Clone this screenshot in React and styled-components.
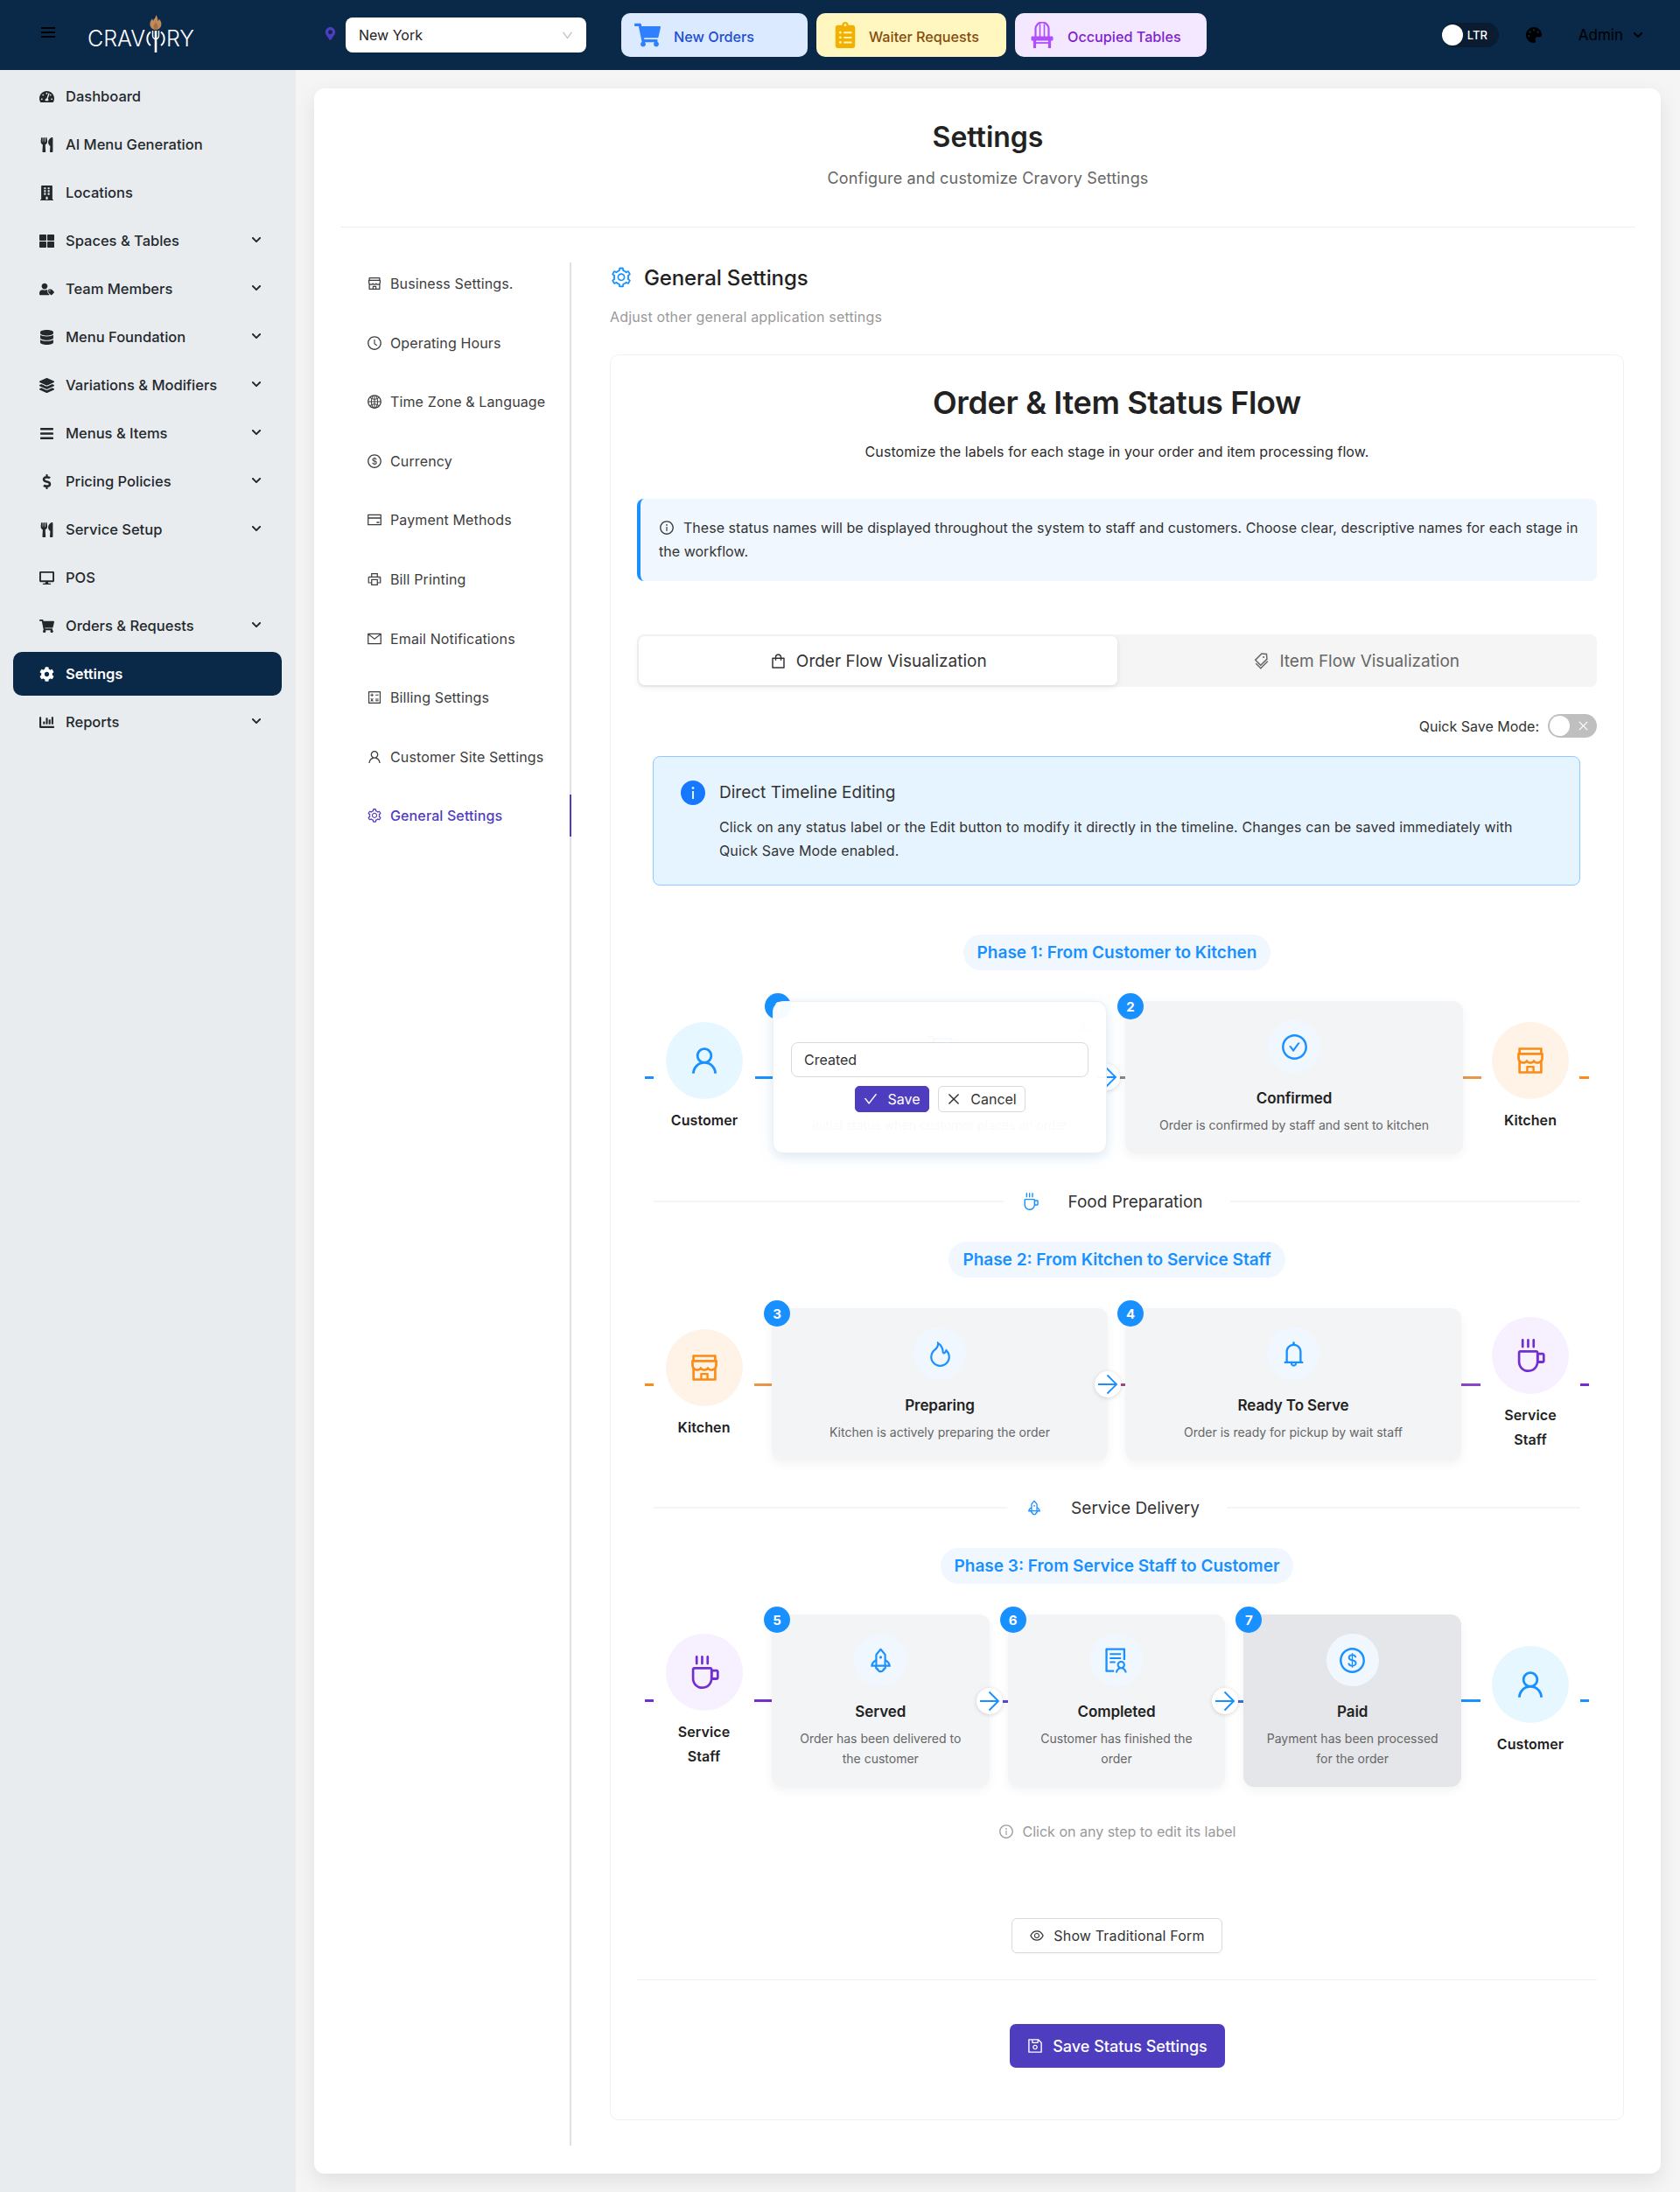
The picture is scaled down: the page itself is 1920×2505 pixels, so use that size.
import React from "react";
import styled, { createGlobalStyle } from "styled-components";
import {
  FaTachometerAlt, FaUtensils, FaBuilding, FaThLarge, FaUserTag, FaDatabase, FaLayerGroup, FaBars,
  FaDollarSign, FaDesktop, FaShoppingCart, FaCog, FaChartBar, FaChevronDown, FaMapMarkerAlt,
  FaClipboardList, FaPalette,
} from "react-icons/fa";
import {
  AiOutlineShop, AiOutlineClockCircle, AiOutlineGlobal, AiOutlineDollar, AiOutlineCreditCard,
  AiOutlinePrinter, AiOutlineMail, AiOutlineCalculator, AiOutlineUser, AiOutlineSetting,
  AiOutlineInfoCircle, AiOutlineShopping, AiOutlineTags, AiOutlineCheckCircle, AiOutlineCoffee,
  AiOutlineFire, AiOutlineBell, AiOutlineRocket, AiOutlineSolution, AiOutlineEye, AiOutlineSave,
  AiOutlineEdit, AiOutlineCheck, AiOutlineClose, AiOutlineShoppingCart,
  AiFillInfoCircle, AiOutlineDown,
} from "react-icons/ai";

const NAVY = "#0a2848";
const INDIGO = "#4f3dc0";
const BLUE = "#1890ff";
const ORANGE = "#fa8c16";
const PURPLE = "#722ed1";

const Global = createGlobalStyle`
  * { box-sizing: border-box; }
  html, body { margin: 0; padding: 0; }
  body {
    font-family: Inter, "Noto Sans", "Liberation Sans", sans-serif;
    background: #f5f5f5;
    color: #212529;
  }
`;

const Header = styled.header`
  height: 80px;
  background: ${NAVY};
  display: flex;
  align-items: center;
  padding: 0 42px 0 47px;
`;
const Burger = styled.div`
  width: 16px;
  margin-top: -6px;
  display: grid;
  gap: 3px;
  & > i { display: block; height: 2px; background: #000; }
`;
const Logo = styled.div`
  margin-left: 37px;
  width: 122px;
  height: 43px;
  margin-top: 17px;
  align-self: flex-start;
  display: flex;
  align-items: flex-start;
  color: #fff;
  font-size: 25px;
  font-weight: 300;
  line-height: 18px;
  & > span { margin-top: 18px; }
  & > svg { flex: none; margin: 0 -3px; }
`;
const Pin = styled.div`
  margin-left: 148px;
  width: 25px;
  display: flex;
  color: ${INDIGO};
  font-size: 15px;
  margin-top: -3px;
`;
const Select = styled.div`
  width: 275px;
  height: 40px;
  background: #fff;
  border-radius: 8px;
  display: flex;
  align-items: center;
  justify-content: space-between;
  padding: 0 14px 0 15px;
  font-size: 16px;
  color: #222;
  & > svg { color: #bfbfbf; font-size: 15px; }
`;
const NotifyRow = styled.div`
  margin-left: 40px;
  display: flex;
  gap: 10px;
`;
const NotifyBtn = styled.div`
  width: ${(p) => p.$w}px;
  height: 50px;
  border-radius: 10px;
  background: ${(p) => p.$bg};
  color: ${(p) => p.$fg};
  display: flex;
  align-items: center;
  padding-left: 15px;
  font-size: 16.2px;
  font-weight: 500;
`;
const NotifyLabel = styled.span`
  margin-top: 3px;
`;
const NotifyIcon = styled.span`
  width: 45px;
  flex: none;
  display: flex;
  padding-left: ${(p) => p.$pad || 0}px;
  color: ${(p) => p.$c};
  font-size: 30px;
`;
const HeaderEnd = styled.div`
  margin-left: auto;
  display: flex;
  align-items: center;
  color: #000;
`;
const DirToggle = styled.div`
  width: 65px;
  height: 28px;
  border-radius: 14px;
  background: #0b1b30;
  display: flex;
  align-items: center;
  gap: 5px;
  color: #fff;
  font-size: 13px;
  font-weight: 500;
  & > i { width: 24px; height: 24px; background: #fff; border-radius: 50%; display: block; }
`;
const Palette = styled.span`
  display: flex;
  margin-left: 31px;
  font-size: 18px;
`;
const Admin = styled.span`
  margin-left: 42px;
  display: flex;
  align-items: center;
  gap: 11px;
  font-size: 17px;
  & > svg { font-size: 12px; }
`;

const Shell = styled.div`
  display: flex;
  align-items: stretch;
`;
const Sidebar = styled.aside`
  width: 338px;
  flex: none;
  background: #e9ecef;
  padding: 5px 16px 0 15px;
  display: grid;
  align-content: start;
  gap: 5px;
`;
const SideItem = styled.div`
  height: 50px;
  display: flex;
  align-items: center;
  padding: 0 23px 0 30px;
  border-radius: 10px;
  font-size: 16.5px;
  font-weight: ${(p) => (p.$active ? 600 : 500)};
  background: ${(p) => (p.$active ? NAVY : "transparent")};
  color: ${(p) => (p.$active ? "#fff" : "#23282d")};
`;
const SideIcon = styled.span`
  width: 30px;
  flex: none;
  display: flex;
  font-size: 17px;
`;
const SideChevron = styled.span`
  margin-left: auto;
  margin-top: -3px;
  display: flex;
  font-size: 12px;
`;

const Main = styled.main`
  flex: 1;
  min-width: 0;
  padding: 21px 22px 21px 21px;
`;
const Card = styled.div`
  background: #fff;
  border-radius: 12px;
  box-shadow: 0 8px 24px rgba(0, 0, 0, 0.09);
  padding: 36px 29px 32px 30px;
`;
const PageHead = styled.div`
  text-align: center;
  padding-bottom: 41px;
  border-bottom: 1px solid #eeeeee;
`;
const PageTitle = styled.h1`
  margin: 0;
  font-size: 32px;
  line-height: 40px;
  font-weight: 600;
  color: #222;
`;
const PageSub = styled.p`
  margin: 13px 0 0;
  font-size: 18px;
  line-height: 28px;
  letter-spacing: 0.01em;
  color: #666;
`;
const Columns = styled.div`
  margin-top: 40px;
  display: flex;
  align-items: stretch;
`;
const SettingsNav = styled.nav`
  width: 264px;
  flex: none;
  border-right: 2px solid #dfe1e5;
`;
const NavItem = styled.div`
  height: 48px;
  margin-bottom: 19.6px;
  margin-right: -2px;
  padding-left: 30px;
  display: flex;
  align-items: center;
  gap: 9px;
  font-size: 16px;
  letter-spacing: 0.008em;
  color: ${(p) => (p.$active ? INDIGO : "#3d3d3d")};
  font-weight: ${(p) => (p.$active ? 500 : 400)};
  border-right: 2px solid ${(p) => (p.$active ? INDIGO : "transparent")};
  & > svg { font-size: 18px; flex: none; }
`;
const Pane = styled.section`
  flex: 1;
  min-width: 0;
  padding: 0 13px 29px 44px;
`;
const PaneHead = styled.div`
  height: 34px;
  display: flex;
  align-items: center;
  gap: 13px;
  font-size: 24px;
  font-weight: 500;
  letter-spacing: -0.005em;
  color: #222;
  & > svg { color: ${BLUE}; font-size: 26px; flex: none; }
`;
const PaneSub = styled.p`
  margin: 16px 0 0;
  font-size: 16px;
  line-height: 24px;
  letter-spacing: 0.01em;
  color: #999;
`;
const Inner = styled.div`
  margin-top: 31px;
  border: 1px solid #f0f0f0;
  border-radius: 10px;
  padding: 29px 30px 59px;
`;
const FlowTitle = styled.h2`
  margin: 0;
  text-align: center;
  font-size: 36px;
  line-height: 50px;
  font-weight: 600;
  letter-spacing: -0.01em;
  color: #222;
`;
const FlowSub = styled.p`
  margin: 19px 0 0;
  text-align: center;
  font-size: 16px;
  line-height: 24px;
  letter-spacing: 0.005em;
  color: #2b2b2b;
`;
const Alert = styled.div`
  margin-top: 42px;
  background: #f0f7ff;
  border-left: 4px solid ${BLUE};
  border-radius: 8px;
  padding: 20px 20px 20px 21px;
  font-size: 16px;
  line-height: 27px;
  letter-spacing: 0.002em;
  color: #333;
  white-space: nowrap;
  & > svg { vertical-align: -3px; margin-right: 10px; font-size: 18px; }
`;
const Tabs = styled.div`
  margin-top: 61px;
  height: 60px;
  background: #f5f5f5;
  border-radius: 8px;
  padding: 2px;
  display: grid;
  grid-template-columns: 1fr 1fr;
`;
const Tab = styled.div`
  display: flex;
  align-items: center;
  justify-content: center;
  gap: 10px;
  border-radius: 7px;
  font-size: 19px;
  background: ${(p) => (p.$active ? "#fff" : "transparent")};
  color: ${(p) => (p.$active ? "#333" : "#666")};
  box-shadow: ${(p) => (p.$active ? "0 2px 6px rgba(0,0,0,.1)" : "none")};
  & > svg { font-size: 21px; }
`;
const QuickRow = styled.div`
  margin-top: 31px;
  height: 27px;
  display: flex;
  align-items: center;
  justify-content: flex-end;
  gap: 10px;
  font-size: 16px;
  color: #333;
`;
const Switch = styled.div`
  width: 56px;
  height: 27px;
  border-radius: 14px;
  background: #bfbfbf;
  padding: 2px 8px 2px 2px;
  display: flex;
  align-items: center;
  justify-content: space-between;
  color: #fff;
  font-size: 15px;
  & > i { width: 23px; height: 23px; background: #fff; border-radius: 50%; display: block; }
`;
const TipBox = styled.div`
  margin: 21px 19px 0 18px;
  height: 148px;
  background: #e6f4ff;
  border: 1px solid #91caff;
  border-radius: 8px;
  padding: 27px 20px 0 31px;
  display: grid;
  grid-template-columns: 30px 1fr;
  column-gap: 14px;
`;
const TipIcon = styled.span`
  display: flex;
  color: #1677ff;
  font-size: 34px;
  margin: -3px 0 0 -2px;
`;
const TipTitle = styled.div`
  font-size: 19px;
  line-height: 27px;
  color: #333;
`;
const TipBody = styled.div`
  margin-top: 13px;
  font-size: 16px;
  line-height: 27px;
  letter-spacing: 0.008em;
  color: #333;
  white-space: nowrap;
`;
const PhaseWrap = styled.div`
  margin-top: ${(p) => p.$mt}px;
  display: flex;
  justify-content: center;
`;
const PhasePill = styled.div`
  height: 41px;
  padding: 0 16px;
  border-radius: 21px;
  background: #f0f7ff;
  color: ${BLUE};
  font-size: 19px;
  font-weight: 600;
  display: flex;
  align-items: center;
`;
const FlowRow = styled.div`
  margin: 35px 9px 0 9px;
  display: flex;
  align-items: center;
`;
const Slot = styled.div`
  flex: none;
  display: flex;
  align-items: center;
  justify-content: space-between;
  width: ${(p) => p.$w}px;
`;
const Dash = styled.i`
  display: block;
  height: 3px;
  flex: none;
  width: ${(p) => p.$w}px;
  background: ${(p) => p.$c};
`;
const Entity = styled.div`
  width: 88px;
  flex: none;
  display: flex;
  flex-direction: column;
  align-items: center;
  gap: 10px;
`;
const EntityCircle = styled.div`
  width: 88px;
  height: 88px;
  border-radius: 50%;
  background: ${(p) => p.$bg};
  color: ${(p) => p.$c};
  display: flex;
  align-items: center;
  justify-content: center;
  font-size: 38px;
`;
const EntityLabel = styled.div`
  font-size: 16px;
  font-weight: 600;
  line-height: 28px;
  letter-spacing: 0.005em;
  color: #222;
  text-align: center;
`;
const Steps = styled.div`
  flex: 1;
  min-width: 0;
  display: grid;
  grid-template-columns: ${(p) => p.$cols};
  column-gap: ${(p) => p.$gap}px;
`;
const StepCard = styled.div`
  position: relative;
  background: ${(p) => (p.$dark ? "#e5e6ea" : "#f3f4f6")};
  border-radius: 12px;
  box-shadow: 0 4px 12px rgba(0, 0, 0, 0.05);
  padding: 22px 14px 21px;
  display: flex;
  flex-direction: column;
  align-items: center;
  text-align: center;
`;
const Badge = styled.span`
  position: absolute;
  left: -9px;
  top: -9px;
  width: 30px;
  height: 30px;
  border-radius: 50%;
  background: ${BLUE};
  color: #fff;
  font-size: 15px;
  font-weight: 700;
  display: flex;
  align-items: center;
  justify-content: center;
  z-index: 1;
`;
const StepIcon = styled.div`
  width: 60px;
  height: 60px;
  border-radius: 50%;
  background: #f0f7ff;
  color: ${BLUE};
  display: flex;
  align-items: center;
  justify-content: center;
  font-size: 33px;
`;
const StepTitle = styled.div`
  margin-top: 15px;
  min-height: 28px;
  font-size: 17px;
  line-height: 28px;
  font-weight: 600;
  letter-spacing: -0.005em;
  color: #222;
`;
const StepDesc = styled.div`
  margin-top: 5px;
  font-size: 14px;
  line-height: 23px;
  color: #666;
`;
const Connector = styled.i`
  position: absolute;
  left: 100%;
  top: calc(50% - 1px);
  width: 22px;
  height: 3px;
  background: ${(p) => p.$c};
`;
const ArrowDot = styled.span`
  position: absolute;
  left: calc(100% - 15px);
  top: calc(50% - 15px);
  width: 30px;
  height: 30px;
  border-radius: 50%;
  background: #fff;
  box-shadow: 0 1px 5px rgba(0, 0, 0, 0.15);
  color: ${BLUE};
  display: flex;
  align-items: center;
  justify-content: center;
  z-index: 2;
`;
const GhostPen = styled.span`
  position: absolute;
  top: 18px;
  right: 16px;
  color: #bbb;
  font-size: 18px;
  display: flex;
`;
const EditPanel = styled.div`
  position: absolute;
  inset: 0;
  z-index: 3;
  background: rgba(255, 255, 255, 0.965);
  border: 1px solid #f0f0f0;
  border-radius: 12px;
  box-shadow: 0 4px 18px rgba(24, 144, 255, 0.1);
  padding: 0 20px;
  display: flex;
  flex-direction: column;
  justify-content: center;
  gap: 10px;
`;
const EditInput = styled.div`
  height: 40px;
  background: #fff;
  border: 1px solid #d9d9d9;
  border-radius: 8px;
  padding: 0 14px;
  display: flex;
  align-items: center;
  font-size: 16px;
  color: #333;
`;
const EditBtns = styled.div`
  display: flex;
  justify-content: center;
  gap: 10px;
`;
const SmallBtn = styled.div`
  height: 30px;
  width: ${(p) => p.$w}px;
  border-radius: 5px;
  display: flex;
  align-items: center;
  justify-content: center;
  gap: 10px;
  font-size: 16px;
  background: ${(p) => (p.$primary ? INDIGO : "#fff")};
  color: ${(p) => (p.$primary ? "#fff" : "#333")};
  border: 1px solid ${(p) => (p.$primary ? INDIGO : "#d9d9d9")};
  & > svg { font-size: 18px; }
`;
const SectionDivider = styled.div`
  margin: ${(p) => p.$mt}px 19px 0;
  height: 24px;
  display: flex;
  align-items: center;
  font-size: 19px;
  color: #333;
  & > i { flex: 1; height: 2px; background: #f5f5f5; display: block; }
  & > svg { color: ${BLUE}; font-size: 20px; margin: 0 32px 0 21px; flex: none; }
  & > span { margin-right: 31px; }
`;
const Hint = styled.div`
  margin-top: 39px;
  display: flex;
  align-items: center;
  justify-content: center;
  gap: 10px;
  font-size: 16px;
  line-height: 24px;
  color: #999;
  & > svg { font-size: 18px; }
`;
const CenterRow = styled.div`
  margin-top: ${(p) => p.$mt}px;
  display: flex;
  justify-content: center;
`;
const GhostBtn = styled.div`
  width: 241px;
  height: 40px;
  border: 1px solid #d9d9d9;
  border-radius: 6px;
  box-shadow: 0 2px 0 rgba(0, 0, 0, 0.02);
  display: flex;
  align-items: center;
  justify-content: center;
  gap: 10px;
  font-size: 16px;
  letter-spacing: 0.01em;
  color: #333;
  & > svg { font-size: 18px; }
`;
const Rule = styled.hr`
  margin: 30px 0 0;
  border: 0;
  border-top: 1px solid #f0f0f0;
`;
const SaveBtn = styled.div`
  width: 246px;
  height: 50px;
  border-radius: 7px;
  background: ${INDIGO};
  color: #fff;
  font-size: 18px;
  font-weight: 500;
  display: flex;
  align-items: center;
  justify-content: center;
  gap: 10px;
  & > svg { font-size: 20px; }
`;

const ChairIcon = () => (
  <svg width="26" height="30" viewBox="0 0 26 30" fill="none" stroke="currentColor">
    <path d="M5.5 17V8a7.5 7.5 0 0 1 15 0v9" strokeWidth="2.2" />
    <path d="M10.5 17V2.5M15.5 17V2.5" strokeWidth="1.6" />
    <rect x="0.5" y="16.5" width="25" height="5" rx="1.2" fill="currentColor" stroke="none" />
    <path d="M4.5 21v9M21.5 21v9" strokeWidth="3.2" />
    <path d="M4.5 24h17" strokeWidth="1.8" />
  </svg>
);

const LogoMark = () => (
  <svg width="30" height="43" viewBox="0 0 30 43" fill="none">
    <path d="M15 0c.5 3-2 4.5-3 7-.6-1-.8-2-.6-3-2 2-3 4-3 6.5 0 4 3 6.5 6.5 6.5s6.5-2.5 6.5-6.5c0-3-1.5-4.5-2.5-6-.2 1-.6 2-1.5 2.5.2-3-.9-5.5-2.4-7z" fill="#c08a5a" />
    <path d="M15 8c1 2 2.5 3.5 2.5 5.5 0 2-1 3.5-2.5 3.5s-2.5-1.5-2.5-3.5c0-2 1.5-3 2.5-5.5z" fill="#a5703f" />
    <path d="M9 19.5a10 10 0 0 0 0 15.5M21 19.5a10 10 0 0 1 0 15.5" stroke="#fff" strokeWidth="2" />
    <path d="M15 18v25" stroke="#fff" strokeWidth="2.6" />
    <path d="M11.5 18v6a3.5 3.5 0 0 0 7 0v-6" stroke="#fff" strokeWidth="1.4" />
  </svg>
);

const ArrowGlyph = () => (
  <svg width="24" height="24" viewBox="0 0 24 24" fill="none" stroke="currentColor" strokeWidth="1.9">
    <path d="M1 12h21M11.5 1.5 22 12 11.5 22.5" />
  </svg>
);

const sideItems = [
  [FaTachometerAlt, "Dashboard"],
  [FaUtensils, "AI Menu Generation"],
  [FaBuilding, "Locations"],
  [FaThLarge, "Spaces & Tables", true],
  [FaUserTag, "Team Members", true],
  [FaDatabase, "Menu Foundation", true],
  [FaLayerGroup, "Variations & Modifiers", true],
  [FaBars, "Menus & Items", true],
  [FaDollarSign, "Pricing Policies", true],
  [FaUtensils, "Service Setup", true],
  [FaDesktop, "POS"],
  [FaShoppingCart, "Orders & Requests", true],
  [FaCog, "Settings", false, true],
  [FaChartBar, "Reports", true],
];

const navItems = [
  [AiOutlineShop, "Business Settings."],
  [AiOutlineClockCircle, "Operating Hours"],
  [AiOutlineGlobal, "Time Zone & Language"],
  [AiOutlineDollar, "Currency"],
  [AiOutlineCreditCard, "Payment Methods"],
  [AiOutlinePrinter, "Bill Printing"],
  [AiOutlineMail, "Email Notifications"],
  [AiOutlineCalculator, "Billing Settings"],
  [AiOutlineUser, "Customer Site Settings"],
  [AiOutlineSetting, "General Settings", true],
];

const ENT = {
  customer: { Icon: AiOutlineUser, bg: "#e6f7ff", c: BLUE, label: "Customer" },
  kitchen: { Icon: AiOutlineShop, bg: "#fff3e8", c: ORANGE, label: "Kitchen" },
  staff: { Icon: AiOutlineCoffee, bg: "#f7f0fe", c: PURPLE, label: "Service Staff" },
};

const EntitySlot = ({ kind, side, w, inner = 20, outer = 10, dashIn, dashOut }) => {
  const e = ENT[kind];
  const out = <Dash $w={outer} $c={dashOut || e.c} />;
  const inn = <Dash $w={inner} $c={dashIn || e.c} />;
  return (
    <Slot $w={w}>
      {side === "left" ? out : inn}
      <Entity>
        <EntityCircle $bg={e.bg} $c={e.c}><e.Icon /></EntityCircle>
        <EntityLabel>{e.label}</EntityLabel>
      </Entity>
      {side === "left" ? inn : out}
    </Slot>
  );
};

const Step = ({ n, Icon, title, desc, dark, link, editing }) => (
  <StepCard $dark={dark}>
    <Badge>{n}</Badge>
    {editing && <GhostPen><AiOutlineEdit /></GhostPen>}
    <StepIcon><Icon /></StepIcon>
    <StepTitle>{editing ? "" : title}</StepTitle>
    <StepDesc>{desc}</StepDesc>
    {link && <Connector $c={link} />}
    {link && <ArrowDot><ArrowGlyph /></ArrowDot>}
    {editing && (
      <EditPanel>
        <EditInput>{title}</EditInput>
        <EditBtns>
          <SmallBtn $primary $w={85}><AiOutlineCheck />Save</SmallBtn>
          <SmallBtn $w={100}><AiOutlineClose />Cancel</SmallBtn>
        </EditBtns>
      </EditPanel>
    )}
  </StepCard>
);

export default function App() {
  return (
    <>
      <Global />
      <Header>
        <Burger><i /><i /><i /></Burger>
        <Logo><span>CRAV</span><LogoMark /><span>RY</span></Logo>
        <Pin><FaMapMarkerAlt /></Pin>
        <Select>New York<AiOutlineDown /></Select>
        <NotifyRow>
          <NotifyBtn $w={213} $bg="#dbeafe" $fg="#1d4ed8">
            <NotifyIcon $c="#2f80ff"><FaShoppingCart /></NotifyIcon><NotifyLabel>New Orders</NotifyLabel>
          </NotifyBtn>
          <NotifyBtn $w={217} $bg="#fff7bf" $fg="#854d0e">
            <NotifyIcon $c="#f2b000" $pad={3}><FaClipboardList /></NotifyIcon><NotifyLabel>Waiter Requests</NotifyLabel>
          </NotifyBtn>
          <NotifyBtn $w={219} $bg="#f3e8ff" $fg="#7e22ce">
            <NotifyIcon $c="#b04dff" $pad={3}><ChairIcon /></NotifyIcon><NotifyLabel>Occupied Tables</NotifyLabel>
          </NotifyBtn>
        </NotifyRow>
        <HeaderEnd>
          <DirToggle><i />LTR</DirToggle>
          <Palette><FaPalette /></Palette>
          <Admin>Admin<FaChevronDown /></Admin>
        </HeaderEnd>
      </Header>
      <Shell>
        <Sidebar>
          {sideItems.map(([Icon, label, chev, active]) => (
            <SideItem key={label} $active={active}>
              <SideIcon><Icon /></SideIcon>
              {label}
              {chev && <SideChevron><FaChevronDown /></SideChevron>}
            </SideItem>
          ))}
        </Sidebar>
        <Main>
          <Card>
            <PageHead>
              <PageTitle>Settings</PageTitle>
              <PageSub>Configure and customize Cravory Settings</PageSub>
            </PageHead>
            <Columns>
              <SettingsNav>
                {navItems.map(([Icon, label, active]) => (
                  <NavItem key={label} $active={active}><Icon />{label}</NavItem>
                ))}
              </SettingsNav>
              <Pane>
                <PaneHead><AiOutlineSetting />General Settings</PaneHead>
                <PaneSub>Adjust other general application settings</PaneSub>
                <Inner>
                  <FlowTitle>Order &amp; Item Status Flow</FlowTitle>
                  <FlowSub>Customize the labels for each stage in your order and item processing flow.</FlowSub>
                  <Alert>
                    <AiOutlineInfoCircle />
                    These status names will be displayed throughout the system to staff and customers. Choose clear, descriptive names for each stage in
                    <br />
                    the workflow.
                  </Alert>
                  <Tabs>
                    <Tab $active><AiOutlineShopping />Order Flow Visualization</Tab>
                    <Tab><AiOutlineTags />Item Flow Visualization</Tab>
                  </Tabs>
                  <QuickRow>
                    Quick Save Mode:
                    <Switch><i /><AiOutlineClose /></Switch>
                  </QuickRow>
                  <TipBox>
                    <TipIcon><AiFillInfoCircle /></TipIcon>
                    <div>
                      <TipTitle>Direct Timeline Editing</TipTitle>
                      <TipBody>
                        Click on any status label or the Edit button to modify it directly in the timeline. Changes can be saved immediately with
                        <br />
                        Quick Save Mode enabled.
                      </TipBody>
                    </div>
                  </TipBox>

                  <PhaseWrap $mt={56}><PhasePill>Phase 1: From Customer to Kitchen</PhasePill></PhaseWrap>
                  <FlowRow>
                    <EntitySlot kind="customer" side="left" w={146} />
                    <Steps $cols="382px 386px" $gap={21}>
                      <Step n={1} Icon={AiOutlineShoppingCart} title="Created" desc="Initial status when customer places an order" link="#8a8a8a" editing />
                      <Step n={2} Icon={AiOutlineCheckCircle} title="Confirmed" desc="Order is confirmed by staff and sent to kitchen" />
                    </Steps>
                    <EntitySlot kind="kitchen" side="right" w={144} inner={21} outer={11} dashIn="#e8964a" />
                  </FlowRow>
                  <SectionDivider $mt={43}>
                    <i /><AiOutlineCoffee /><span>Food Preparation</span><i />
                  </SectionDivider>

                  <PhaseWrap $mt={34}><PhasePill>Phase 2: From Kitchen to Service Staff</PhasePill></PhaseWrap>
                  <FlowRow>
                    <EntitySlot kind="kitchen" side="left" w={145} dashIn="#e8964a" />
                    <Steps $cols="1fr 1fr" $gap={20}>
                      <Step n={3} Icon={AiOutlineFire} title="Preparing" desc="Kitchen is actively preparing the order" link="#a04b7e" />
                      <Step n={4} Icon={AiOutlineBell} title="Ready To Serve" desc="Order is ready for pickup by wait staff" />
                    </Steps>
                    <EntitySlot kind="staff" side="right" w={146} inner={22} dashIn="#8a45c8" />
                  </FlowRow>
                  <SectionDivider $mt={42}>
                    <i /><AiOutlineRocket /><span>Service Delivery</span><i />
                  </SectionDivider>

                  <PhaseWrap $mt={34}><PhasePill>Phase 3: From Service Staff to Customer</PhasePill></PhaseWrap>
                  <FlowRow>
                    <EntitySlot kind="staff" side="left" w={145} />
                    <Steps $cols="1fr 1fr 1fr" $gap={21}>
                      <Step n={5} Icon={AiOutlineRocket} title="Served" desc={<>Order has been delivered to<br />the customer</>} link="#5a48d8" />
                      <Step n={6} Icon={AiOutlineSolution} title="Completed" desc={<>Customer has finished the<br />order</>} link="#3f6fe0" />
                      <Step n={7} Icon={AiOutlineDollar} title="Paid" desc={<>Payment has been processed<br />for the order</>} dark />
                    </Steps>
                    <EntitySlot kind="customer" side="right" w={146} inner={22} />
                  </FlowRow>

                  <Hint><AiOutlineInfoCircle />Click on any step to edit its label</Hint>
                  <CenterRow $mt={87}><GhostBtn><AiOutlineEye />Show Traditional Form</GhostBtn></CenterRow>
                  <Rule />
                  <CenterRow $mt={50}><SaveBtn><AiOutlineSave />Save Status Settings</SaveBtn></CenterRow>
                </Inner>
              </Pane>
            </Columns>
          </Card>
        </Main>
      </Shell>
    </>
  );
}
